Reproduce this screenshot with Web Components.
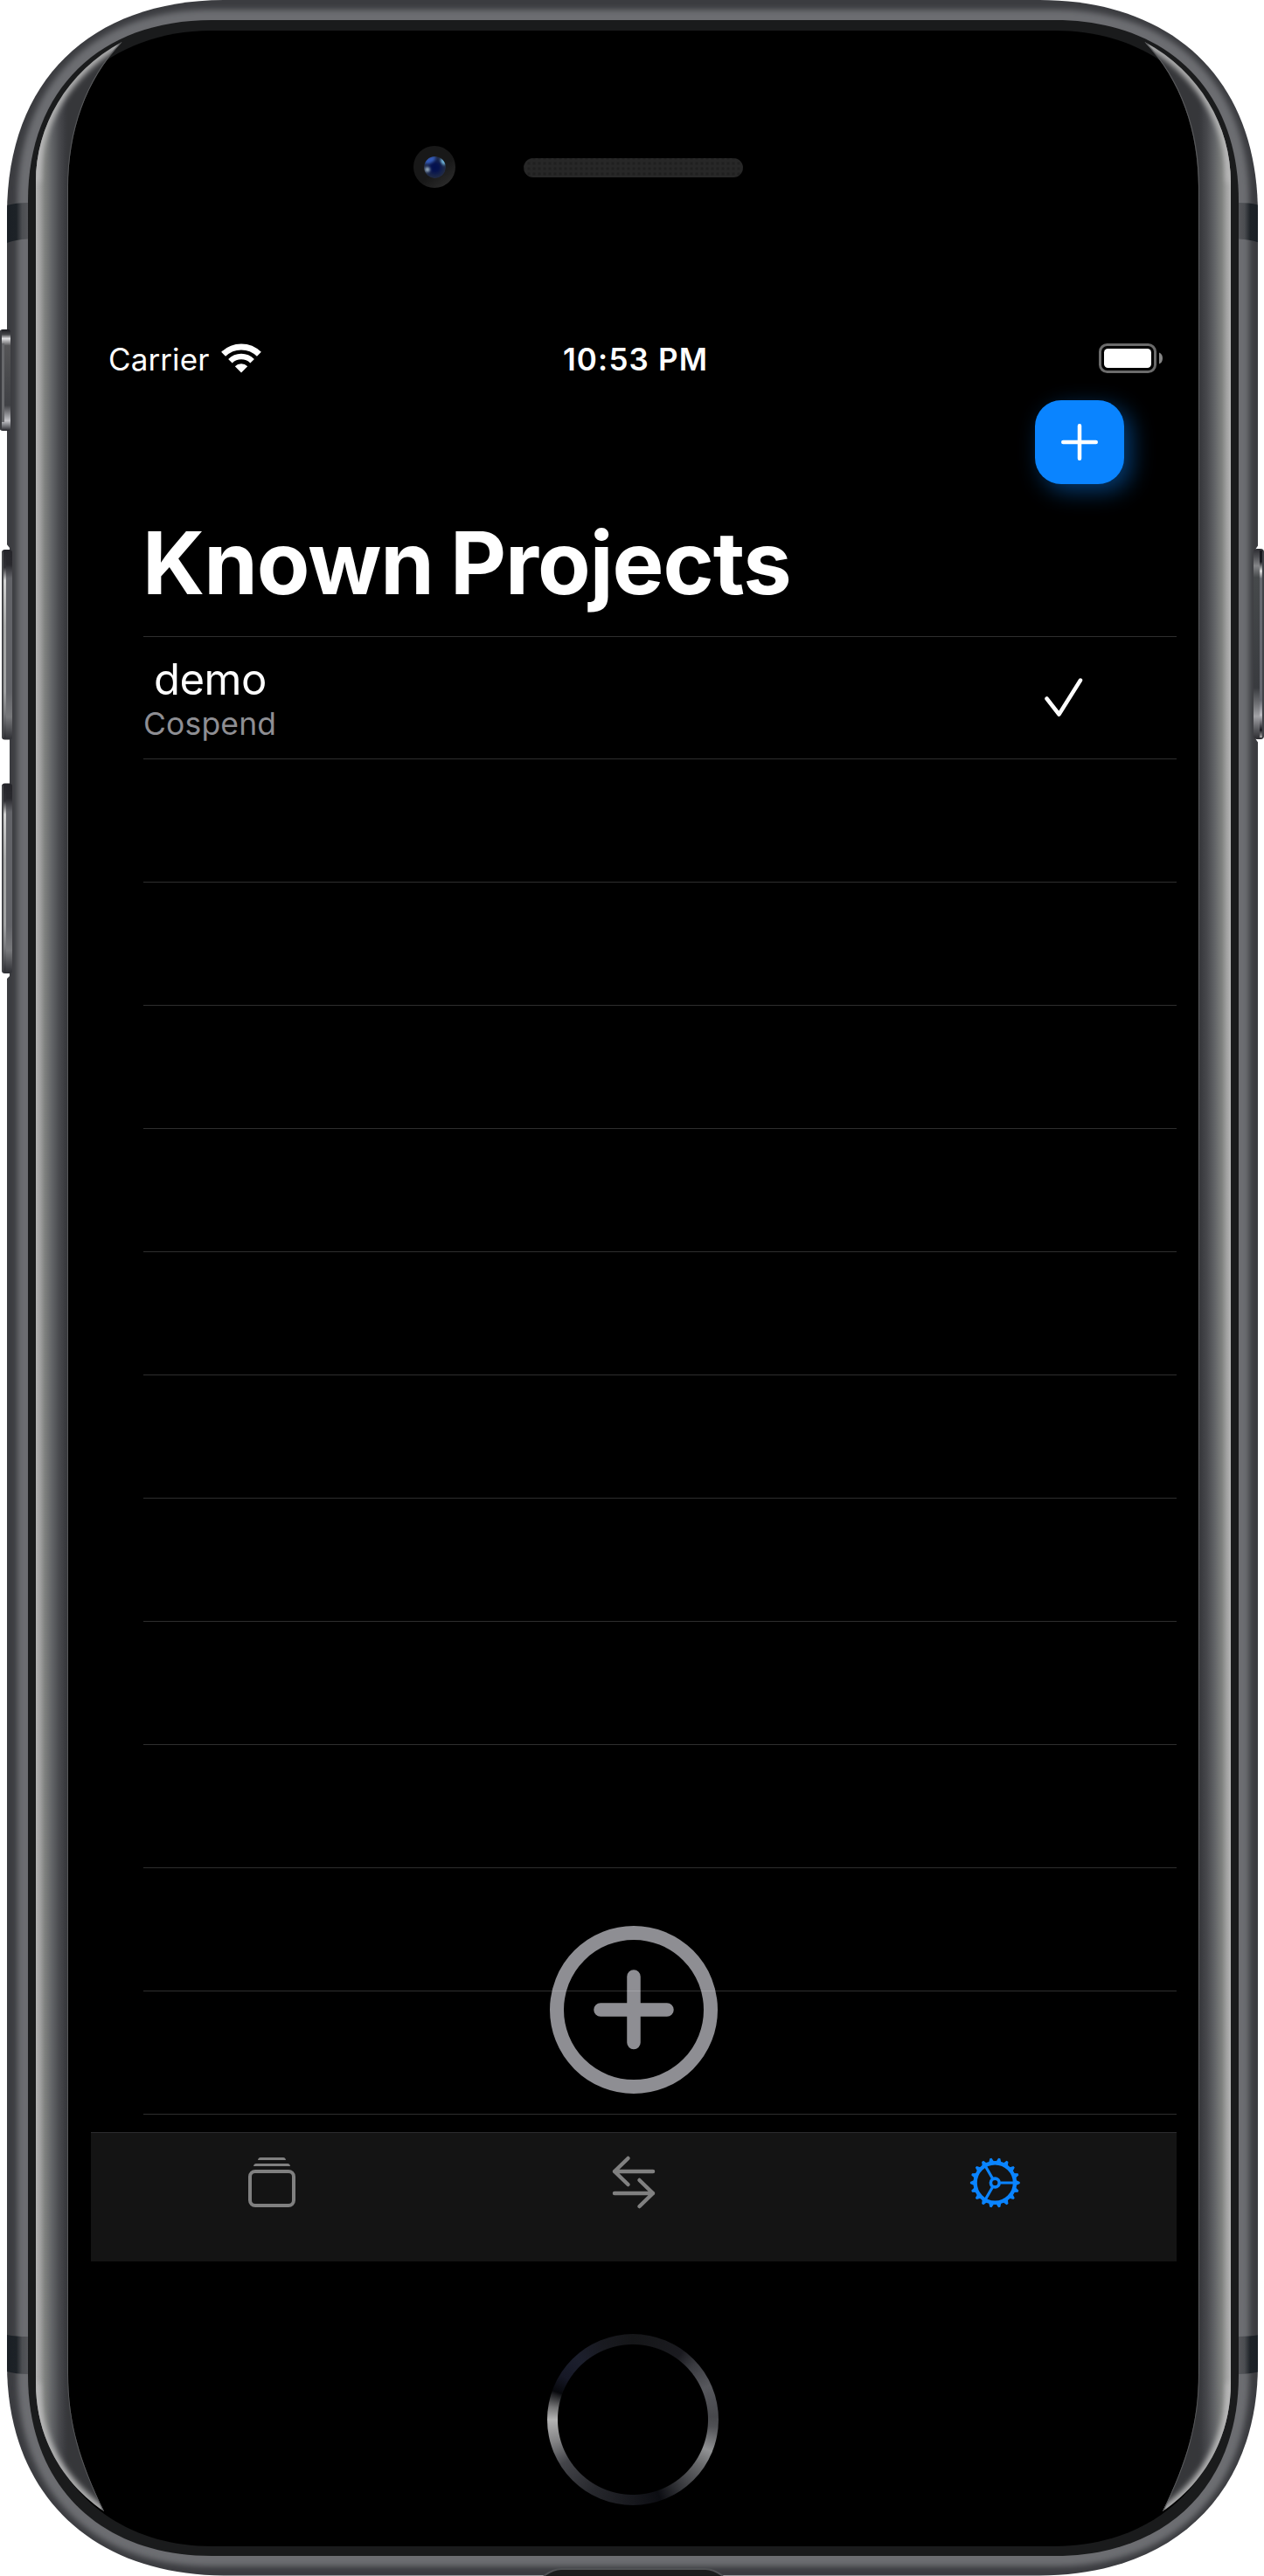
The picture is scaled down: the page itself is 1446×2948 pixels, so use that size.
<!DOCTYPE html>
<html lang="en">
<head>
<meta charset="utf-8">
<title>Known Projects</title>
<style>
html,body{margin:0;padding:0;background:#fff}
body{width:1446px;height:2948px;overflow:hidden;font-family:Inter,"Liberation Sans",sans-serif;color:#fff}
</style>
</head>
<body>
<phone-device>
  <status-bar slot="screen" carrier="Carrier" time="10:53 PM"></status-bar>
  <nav-header slot="screen">Known Projects</nav-header>
  <project-list slot="screen">
    <project-row><span slot="name">demo</span><span slot="backend">Cospend</span></project-row>
  </project-list>
  <tab-bar slot="screen"></tab-bar>
</phone-device>
<script>
const define = (name, html, setup) => customElements.define(name, class extends HTMLElement {
  constructor() {
    super();
    this.attachShadow({mode: 'open'}).innerHTML = html;
  }
  connectedCallback() { if (setup) setup(this, this.shadowRoot); }
});

define('device-shell', `
<style>:host{display:block;width:1446px;height:2948px}svg{display:block}</style>
<svg width="1446" height="2948" viewBox="0 0 1446 2948">
  <defs>
    <path id="body" d="M8 245C8 92 104 0 258 0H1189C1343 0 1439 92 1439 245V2706C1439 2853 1343 2947.500 1189 2947.500H258C104 2947.500 8 2853 8 2706Z"/>
    <path id="rim" d="M32 230C32 102 115 23 242 23H1207C1334 23 1417 102 1417 230V2718C1417 2845 1334 2925 1207 2925H242C115 2925 32 2845 32 2718Z"/>
    <path id="face" d="M41 230C41 112 126 35 242 35H1207C1323 35 1408 112 1408 230V2716C1408 2834 1323 2914 1207 2914H242C126 2914 41 2834 41 2716Z"/>
    <path id="glassL" d="M139.500 48C76 82 41 145 41 208V2727C41 2790 72 2842 119 2874C92 2818 78 2774 78 2716V215C78 150 98 92 139.500 48Z"/>
    <clipPath id="cBody"><use href="#body"/></clipPath>
    <clipPath id="cGlass"><use href="#glassL"/></clipPath>
    <filter id="soft" x="-5%" y="-5%" width="110%" height="110%"><feGaussianBlur stdDeviation="3"/></filter>
    <filter id="soft2" filterUnits="userSpaceOnUse" x="0" y="0" width="200" height="2948"><feGaussianBlur stdDeviation="3"/></filter>
    <linearGradient id="glass" gradientUnits="userSpaceOnUse" x1="41" y1="0" x2="78" y2="0">
      <stop offset="0" stop-color="#b4b4b4"/><stop offset=".12" stop-color="#a3a3a3"/><stop offset=".28" stop-color="#7f817f"/>
      <stop offset=".5" stop-color="#626467"/><stop offset=".72" stop-color="#494a4e"/><stop offset=".92" stop-color="#393a3e"/><stop offset="1" stop-color="#36373a"/>
    </linearGradient>
    <linearGradient id="ant"><stop offset="0" stop-color="#1a1f25"/><stop offset=".45" stop-color="#1d2227"/><stop offset=".72" stop-color="#4b4d51"/><stop offset="1" stop-color="#55565a"/></linearGradient>
    <linearGradient id="k1" x2="0" y2="1"><stop offset="0" stop-color="#1c1c21"/><stop offset=".05" stop-color="#444548"/><stop offset=".09" stop-color="#e0e0e2"/><stop offset=".16" stop-color="#555557"/><stop offset=".5" stop-color="#48494c"/><stop offset=".75" stop-color="#404145"/><stop offset=".9" stop-color="#c4c4c8"/><stop offset=".96" stop-color="#67686d"/><stop offset="1" stop-color="#242429"/></linearGradient>
    <linearGradient id="k2" x2="0" y2="1"><stop offset="0" stop-color="#25252a"/><stop offset=".08" stop-color="#29292e"/><stop offset=".15" stop-color="#626368"/><stop offset=".75" stop-color="#626368"/><stop offset=".88" stop-color="#77787b"/><stop offset="1" stop-color="#2e2f34"/></linearGradient>
    <linearGradient id="k2l" x2="0" y2="1"><stop offset="0" stop-color="#25252a"/><stop offset=".09" stop-color="#303035"/><stop offset=".16" stop-color="#d2d2d2"/><stop offset=".4" stop-color="#a7a8a8"/><stop offset=".75" stop-color="#a0a1a2"/><stop offset=".87" stop-color="#77787b"/><stop offset="1" stop-color="#2e2f34"/></linearGradient>
    <linearGradient id="k3" x2="0" y2="1"><stop offset="0" stop-color="#2c2c31"/><stop offset=".04" stop-color="#4c4d51"/><stop offset=".09" stop-color="#858689"/><stop offset=".15" stop-color="#46494b"/><stop offset=".73" stop-color="#393b3f"/><stop offset=".82" stop-color="#737478"/><stop offset=".88" stop-color="#a2a2a6"/><stop offset=".95" stop-color="#56575b"/><stop offset="1" stop-color="#2d2d31"/></linearGradient>
    <linearGradient id="k3h" x2="0" y2="1"><stop offset="0" stop-color="#17171d"/><stop offset=".06" stop-color="#1b1b21"/><stop offset=".11" stop-color="#ddd"/><stop offset=".15" stop-color="#686970"/><stop offset=".8" stop-color="#666870"/><stop offset=".88" stop-color="#bcbcc2"/><stop offset=".96" stop-color="#1b1b21"/><stop offset="1" stop-color="#aaa"/></linearGradient>
    <pattern id="mesh" width="6" height="6" patternUnits="userSpaceOnUse" x="599" y="181"><rect width="6" height="6" fill="#1f1f1f"/><path d="M3 0V6M0 3H6" stroke="#272727" stroke-width="3"/></pattern>
    <linearGradient id="cam" x1=".2" y1=".1" x2=".8" y2=".9"><stop offset="0" stop-color="#181818"/><stop offset=".6" stop-color="#181818"/><stop offset="1" stop-color="#292929"/></linearGradient>
    <radialGradient id="lens"><stop offset="0" stop-color="#02104e"/><stop offset=".35" stop-color="#06134e"/><stop offset=".75" stop-color="#182449"/><stop offset="1" stop-color="#222b43"/></radialGradient>
    <clipPath id="cLens"><circle cx="497.500" cy="191.500" r="12.500"/></clipPath>
    <filter id="b1" x="-50%" y="-50%" width="200%" height="200%"><feGaussianBlur stdDeviation="1.500"/></filter>
    <g id="side">
      <use href="#glassL" fill="url(#glass)"/>
      <g clip-path="url(#cGlass)"><path d="M139.500 48C76 82 41 145 41 208M41 2727C41 2790 72 2842 119 2874" stroke="#b8b8b8" stroke-width="9" fill="none" filter="url(#soft2)"/>
      <path d="M78 2716V215C78 150 98 92 139.500 48M78 2716C78 2774 92 2818 119 2874" fill="none" stroke="#58595b" stroke-width="2"/></g>
      <path d="M8 235Q18 232 32 232V273.500Q18 274 8 278Z" fill="url(#ant)"/>
      <path d="M8 2672Q18 2674 32 2674V2717Q18 2717 8 2714Z" fill="url(#ant)"/>
    </g>
  </defs>
  <use href="#body" fill="#3b3c40"/>
  <g clip-path="url(#cBody)"><use href="#rim" fill="none" stroke="#6c6d71" stroke-width="24" filter="url(#soft)"/></g>
  <path d="M622 2948Q633 2940 642 2940H807Q816 2940 827 2948" fill="#1b1d1d" stroke="#505255" stroke-width="2"/>
  <use href="#rim" fill="#1a1b1c"/>
  <use href="#face" fill="#000"/>
  <g clip-path="url(#cBody)">
    <use href="#side"/>
    <use href="#side" transform="translate(1449 0) scale(-1 1)"/>
  </g>
  <path d="M7 622L11 627V1117L7 1121Z" fill="#fff"/>
  <path d="M1440 623L1436 629V845L1440 851Z" fill="#fff"/>
  <rect x="0" y="377" width="12" height="116" rx="3" fill="url(#k1)"/>
  <rect x="0" y="378" width="2" height="114" rx="1" fill="#3a3b3f"/><rect x="2" y="393" width="3" height="90" fill="#67686b"/>
  <g id="vol"><rect x="2" y="629" width="12" height="217.500" rx="3.500" fill="url(#k2)"/><rect x="2" y="631" width="2" height="213" rx="1" fill="#46474a"/><rect x="4" y="630" width="3" height="215" fill="url(#k2l)"/></g>
  <use href="#vol" y="267.500"/>
  <rect x="1434" y="628" width="12" height="218" rx="4" fill="url(#k3)"/>
  <rect x="1441" y="630" width="3" height="214" fill="url(#k3h)"/><rect x="1444" y="632" width="2" height="210" fill="#414247"/>
  <circle cx="497" cy="191" r="24" fill="url(#cam)"/>
  <g clip-path="url(#cLens)"><circle cx="497.500" cy="191.500" r="12.500" fill="url(#lens)"/>
    <ellipse cx="492" cy="183" rx="7" ry="3.500" transform="rotate(-28 492 183)" fill="#355cba" filter="url(#b1)"/>
    <circle cx="489" cy="194" r="2.800" fill="#a2b9c9" filter="url(#b1)"/><ellipse cx="507" cy="185" rx="2" ry="4" transform="rotate(-30 507 185)" fill="#85d7ff" filter="url(#b1)"/></g>
  <rect x="599" y="181" width="251" height="22" rx="11" fill="url(#mesh)"/>
</svg>`);

define('home-button', `
<style>:host{display:block;width:196px;height:196px;border-radius:50%;
background:radial-gradient(circle,#000 85.500px,transparent 86.500px),conic-gradient(#151618 0deg,#1b1b20 36deg,#3a3b40 48deg,#57585d 66deg,#47484c 88deg,#505155 95deg,#919294 112deg,#68696b 124deg,#3c3d41 142deg,#0c0d12 161deg,#17181d 180deg,#27282d 210deg,#44454a 238deg,#828284 254deg,#b3b3b3 270deg,#737374 279deg,#07080c 290deg,#161826 302deg,#1c1f2d 318deg,#191a20 338deg,#151618 360deg)}</style>`);

define('phone-device', `
<style>
:host{display:grid;width:1446px;height:2948px;overflow:hidden}
device-shell,.content{grid-area:1/1}
.content{display:flex;flex-direction:column;align-items:center;padding:375px 100px 0 104px;z-index:1}
.screen{display:flex;flex-direction:column;width:1242px;height:2213px}
home-button{margin-top:83px;margin-right:2px}
</style>
<device-shell></device-shell>
<div class="content"><div class="screen"><slot name="screen"></slot></div><home-button></home-button></div>`);

define('status-bar', `
<style>
:host{display:grid;grid-template-columns:1fr auto 1fr;align-items:center;height:70px;padding:0 16px 0 20px;font-size:35px}
.l{display:flex;align-items:center;gap:14px}
.c,.t{line-height:68px;padding-top:2px}
.c{letter-spacing:.1px}
.t{font-weight:600;letter-spacing:1.150px}
.b{justify-self:end}
svg{display:block}
</style>
<div class="l"><span class="c"></span><svg width="46" height="34" viewBox="0 0 46 34"><g fill="none" stroke="#fff"><path d="M2.600 12.300A29 29 0 0 1 43.400 12.300" stroke-width="7"/><path d="M10.400 20.200A18 18 0 0 1 35.600 20.200" stroke-width="6.500"/></g><path d="M23 33.500L15.800 26.200A10.200 10.200 0 0 1 30.200 26.200Z" fill="#fff"/></svg></div>
<span class="t"></span>
<svg class="b" width="73" height="34" viewBox="0 0 73 34"><rect x="1.500" y="1.500" width="63" height="31" rx="8" fill="none" stroke="#6b6b6b" stroke-width="3"/><rect x="6" y="6" width="54" height="22" rx="4.500" fill="#fff"/><path d="M69 10.500Q73 12 73 17T69 23.500Z" fill="#858585"/></svg>`,
(el, r) => { r.querySelector('.c').textContent = el.getAttribute('carrier'); r.querySelector('.t').textContent = el.getAttribute('time'); });

define('add-button', `
<style>:host{display:grid;place-items:center;width:102px;height:96px;border-radius:30px;background:#0a84ff;box-shadow:8px 8px 26px rgba(10,132,255,.45)}</style>
<svg width="46" height="46" viewBox="0 0 46 46"><path d="M23 4.250V41.750M4.250 23H41.750" stroke="#fff" stroke-width="4.500" stroke-linecap="round"/></svg>`);

define('nav-header', `
<style>
:host{display:flex;flex-direction:column;height:283px;padding:13px 60px 0 60px;box-sizing:border-box}
add-button{align-self:flex-end}
h1{margin:30px 0 0 -1px;font-size:99px;line-height:120px;font-weight:700;letter-spacing:-1px;word-spacing:-3.500px;white-space:nowrap}
</style>
<add-button></add-button><h1><slot></slot></h1>`);

define('project-row', `
<style>
:host{display:flex;justify-content:space-between;align-items:center;height:139px;padding-right:106px}
.text{display:flex;flex-direction:column;padding-top:4px}
.n{font-size:49px;line-height:56px;margin-left:12px;letter-spacing:-.5px}
.k{font-size:35.500px;line-height:45px;color:#8e8e93;letter-spacing:.150px}
svg{margin-bottom:4px}
</style>
<div class="text"><div class="n"><slot name="name"></slot></div><div class="k"><slot name="backend"></slot></div></div>
<svg width="46" height="46" viewBox="0 0 46 46"><path d="M3.500 25.500L17.500 43.500L42 4.500" fill="none" stroke="#fff" stroke-width="4.500" stroke-linecap="round" stroke-linejoin="round"/></svg>`);

define('empty-row', `<style>:host{display:block;height:140px;border-bottom:1px solid rgba(255,255,255,.18)}</style>`);

define('project-list', `
<style>
:host{display:grid;height:1712px}
.rows{grid-area:1/1;margin-left:60px;display:flex;flex-direction:column;z-index:1}
.first{border-top:1px solid rgba(255,255,255,.18);border-bottom:1px solid rgba(255,255,255,.18)}
.plus{grid-area:1/1;align-self:end;justify-self:center;margin-bottom:44px;display:block}
</style>
<div class="rows"><div class="first"><slot></slot></div></div>
<svg class="plus" width="192" height="192" viewBox="0 0 192 192"><circle cx="96" cy="96" r="88" fill="none" stroke="#8e8e93" stroke-width="16"/><path d="M96 58V133.500M58 96H134" stroke="#8e8e93" stroke-width="15.500" stroke-linecap="round"/></svg>`,
(el, r) => { for (let i = 0; i < 11; i++) r.querySelector('.rows').append(document.createElement('empty-row')); });

define('tab-bar', `
<style>
:host{display:flex;height:148px;box-sizing:border-box;background:#141414;border-top:1px solid #2c2c2e}
div{flex:1;display:flex;justify-content:center;padding-top:24px}
svg{display:block;overflow:visible}
</style>
<div><svg width="60" height="64" viewBox="0 0 60 64"><g fill="#808080"><path d="M14 7Q14.500 4 17 4H43Q45.500 4 46 7ZM9 14Q9.500 11 12 11H48Q50.500 11 51 14Z"/></g><rect x="5" y="20" width="50" height="39" rx="6" fill="none" stroke="#808080" stroke-width="4"/></svg></div>
<div><svg width="60" height="64" viewBox="0 0 60 64"><path d="M52 20H8M23.500 5L8 20L23.500 35M8 45H52M36.500 30L52 45L36.500 60" fill="none" stroke="#808080" stroke-width="4.500" stroke-linecap="round" stroke-linejoin="round"/></svg></div>
<div><svg width="60" height="64" viewBox="0 0 60 64"><g id="gear" transform="translate(29.300 33)" fill="none" stroke="#0a84ff"><circle r="22.700" stroke-width="4.400"/><circle r="4.900" stroke-width="3.600"/><path d="M6 0H21M-3 5.200L-11 19M-3 -5.200L-11 -19" stroke-width="3.200"/></g></svg></div>`,
(el, r) => {
  const gear = r.getElementById('gear');
  for (let i = 0; i < 18; i++) {
    const tooth = document.createElementNS('http://www.w3.org/2000/svg', 'path');
    tooth.setAttribute('d', 'M23.500 -3.200L28.400 -1.100V1.100L23.500 3.200Z');
    tooth.setAttribute('fill', '#0a84ff');
    tooth.setAttribute('stroke', 'none');
    tooth.setAttribute('transform', `rotate(${i * 20})`);
    gear.append(tooth);
  }
});
</script>
</body>
</html>
